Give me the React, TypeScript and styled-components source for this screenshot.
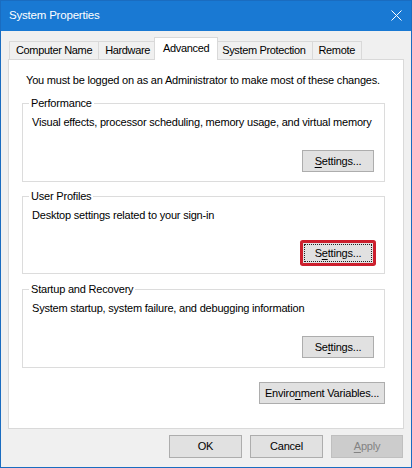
import type { ReactNode } from "react";
import styled, { createGlobalStyle } from "styled-components";

const UI_FONT = `"Liberation Sans", Arial, sans-serif`;

const GlobalStyle = createGlobalStyle`
  html, body {
    margin: 0;
    padding: 0;
    background: #ffffff;
  }
  * {
    box-sizing: border-box;
  }
`;

const Window = styled.div`
  width: 412px;
  height: 468px;
  border: 1px solid #1a6cc0;
  background: #f0f0f0;
  display: flex;
  flex-direction: column;
  font-family: ${UI_FONT};
  font-size: 11px;
  letter-spacing: -0.2px;
  color: #000;
`;

const TitleBar = styled.div`
  flex: none;
  height: 30px;
  background: #1979d3;
  color: #fff;
  display: flex;
  align-items: center;
  justify-content: space-between;
  padding: 0 9px 1px 8px;
`;

const Title = styled.span`
  font-size: 11.5px;
  line-height: 15px;
`;

const Body = styled.div`
  flex: 1;
  display: flex;
  flex-direction: column;
  padding: 6px 7px 0;
`;

const TabStrip = styled.div`
  display: flex;
  align-items: flex-end;
  height: 22px;
  padding-left: 1px;
  position: relative;
  z-index: 1;
`;

const Tab = styled.div<{ $active?: boolean }>`
  height: ${(p) => (p.$active ? 23 : 18)}px;
  margin: ${(p) => (p.$active ? "0 -2px -1px -3px" : "0 0 0 -1px")};
  padding: ${(p) => (p.$active ? "3px 8px 0" : "1px 6px 0")};
  background: ${(p) => (p.$active ? "#ffffff" : "#f0f0f0")};
  border: 1px solid #d9d9d9;
  border-bottom: none;
  line-height: 15px;
  letter-spacing: -0.35px;
  white-space: nowrap;
  position: relative;
  z-index: ${(p) => (p.$active ? 2 : 1)};

  &:first-child {
    margin-left: 0;
  }
`;

const Panel = styled.div`
  height: 370px;
  background: #ffffff;
  border: 1px solid #d9d9d9;
  padding: 13px 18px 0 13px;
  display: flex;
  flex-direction: column;
`;

const Notice = styled.div`
  padding-left: 4px;
  line-height: 15px;
  white-space: nowrap;
`;

const Group = styled.fieldset<{ $gap: number }>`
  margin: ${(p) => p.$gap}px 0 0;
  padding: 0 10px 9px 9px;
  border: 1px solid #dcdcdc;
  min-width: 0;
`;

const Legend = styled.legend`
  margin-left: -3px;
  padding: 0 2px;
  line-height: 15px;
`;

const Description = styled.div`
  margin-top: 4px;
  line-height: 15px;
  white-space: nowrap;
`;

const ButtonRow = styled.div<{ $gap: number }>`
  display: flex;
  justify-content: flex-end;
  margin-top: ${(p) => p.$gap}px;
`;

const Button = styled.button<{ $width: number; $height: number; $marked?: boolean }>`
  width: ${(p) => p.$width}px;
  height: ${(p) => p.$height}px;
  padding: 1px;
  display: flex;
  background: #e1e1e1;
  border: 1px solid ${(p) => (p.$marked ? "#cc1f2d" : "#adadad")};
  border-radius: ${(p) => (p.$marked ? "1px" : "0")};
  box-shadow: ${(p) => (p.$marked ? "0 0 0 2px #cc1f2d" : "none")};
  font: inherit;
  letter-spacing: inherit;
  color: #000;
  white-space: nowrap;

  &:disabled {
    background: #cccccc;
    border-color: #bfbfbf;
    color: #838383;
  }
`;

const Face = styled.span<{ $focused?: boolean }>`
  flex: 1;
  display: flex;
  align-items: center;
  justify-content: center;
  line-height: 15px;
  border: 1px dotted ${(p) => (p.$focused ? "#222" : "transparent")};
`;

const Key = styled.span`
  text-decoration: underline;
  text-underline-offset: 2px;
`;

const Footer = styled.div`
  display: flex;
  justify-content: flex-end;
  gap: 8px;
  padding: 6px 1px 0 0;
`;

interface PushButtonProps {
  width: number;
  height?: number;
  marked?: boolean;
  focused?: boolean;
  disabled?: boolean;
  children: ReactNode;
}

function PushButton({ width, height = 22, marked, focused, disabled, children }: PushButtonProps) {
  return (
    <Button $width={width} $height={height} $marked={marked} disabled={disabled}>
      <Face $focused={focused}>
        <span>{children}</span>
      </Face>
    </Button>
  );
}

function CloseIcon() {
  return (
    <svg width="11" height="11" viewBox="0 0 11 11">
      <path d="M0.5 0.5 L10.5 10.5 M10.5 0.5 L0.5 10.5" stroke="#fff" strokeWidth="1" />
    </svg>
  );
}

export default function App() {
  return (
    <>
      <GlobalStyle />
      <Window>
        <TitleBar>
          <Title>System Properties</Title>
          <CloseIcon />
        </TitleBar>
        <Body>
          <TabStrip>
            <Tab>Computer Name</Tab>
            <Tab>Hardware</Tab>
            <Tab $active>Advanced</Tab>
            <Tab>System Protection</Tab>
            <Tab>Remote</Tab>
          </TabStrip>
          <Panel>
            <Notice>
              You must be logged on as an Administrator to make most of these changes.
            </Notice>

            <Group $gap={8}>
              <Legend>Performance</Legend>
              <Description>
                Visual effects, processor scheduling, memory usage, and virtual memory
              </Description>
              <ButtonRow $gap={20}>
                <PushButton width={72}>
                  <Key>S</Key>ettings...
                </PushButton>
              </ButtonRow>
            </Group>

            <Group $gap={7}>
              <Legend>User Profiles</Legend>
              <Description>Desktop settings related to your sign-in</Description>
              <ButtonRow $gap={19}>
                <PushButton width={72} marked focused>
                  S<Key>e</Key>ttings...
                </PushButton>
              </ButtonRow>
            </Group>

            <Group $gap={8}>
              <Legend>Startup and Recovery</Legend>
              <Description>
                System startup, system failure, and debugging information
              </Description>
              <ButtonRow $gap={20}>
                <PushButton width={72}>
                  Se<Key>t</Key>tings...
                </PushButton>
              </ButtonRow>
            </Group>

            <ButtonRow $gap={14}>
              <PushButton width={126}>
                Enviro<Key>n</Key>ment Variables...
              </PushButton>
            </ButtonRow>
          </Panel>
          <Footer>
            <PushButton width={73} height={23}>
              OK
            </PushButton>
            <PushButton width={73} height={23}>
              Cancel
            </PushButton>
            <PushButton width={72} height={23} disabled>
              <Key>A</Key>pply
            </PushButton>
          </Footer>
        </Body>
      </Window>
    </>
  );
}
